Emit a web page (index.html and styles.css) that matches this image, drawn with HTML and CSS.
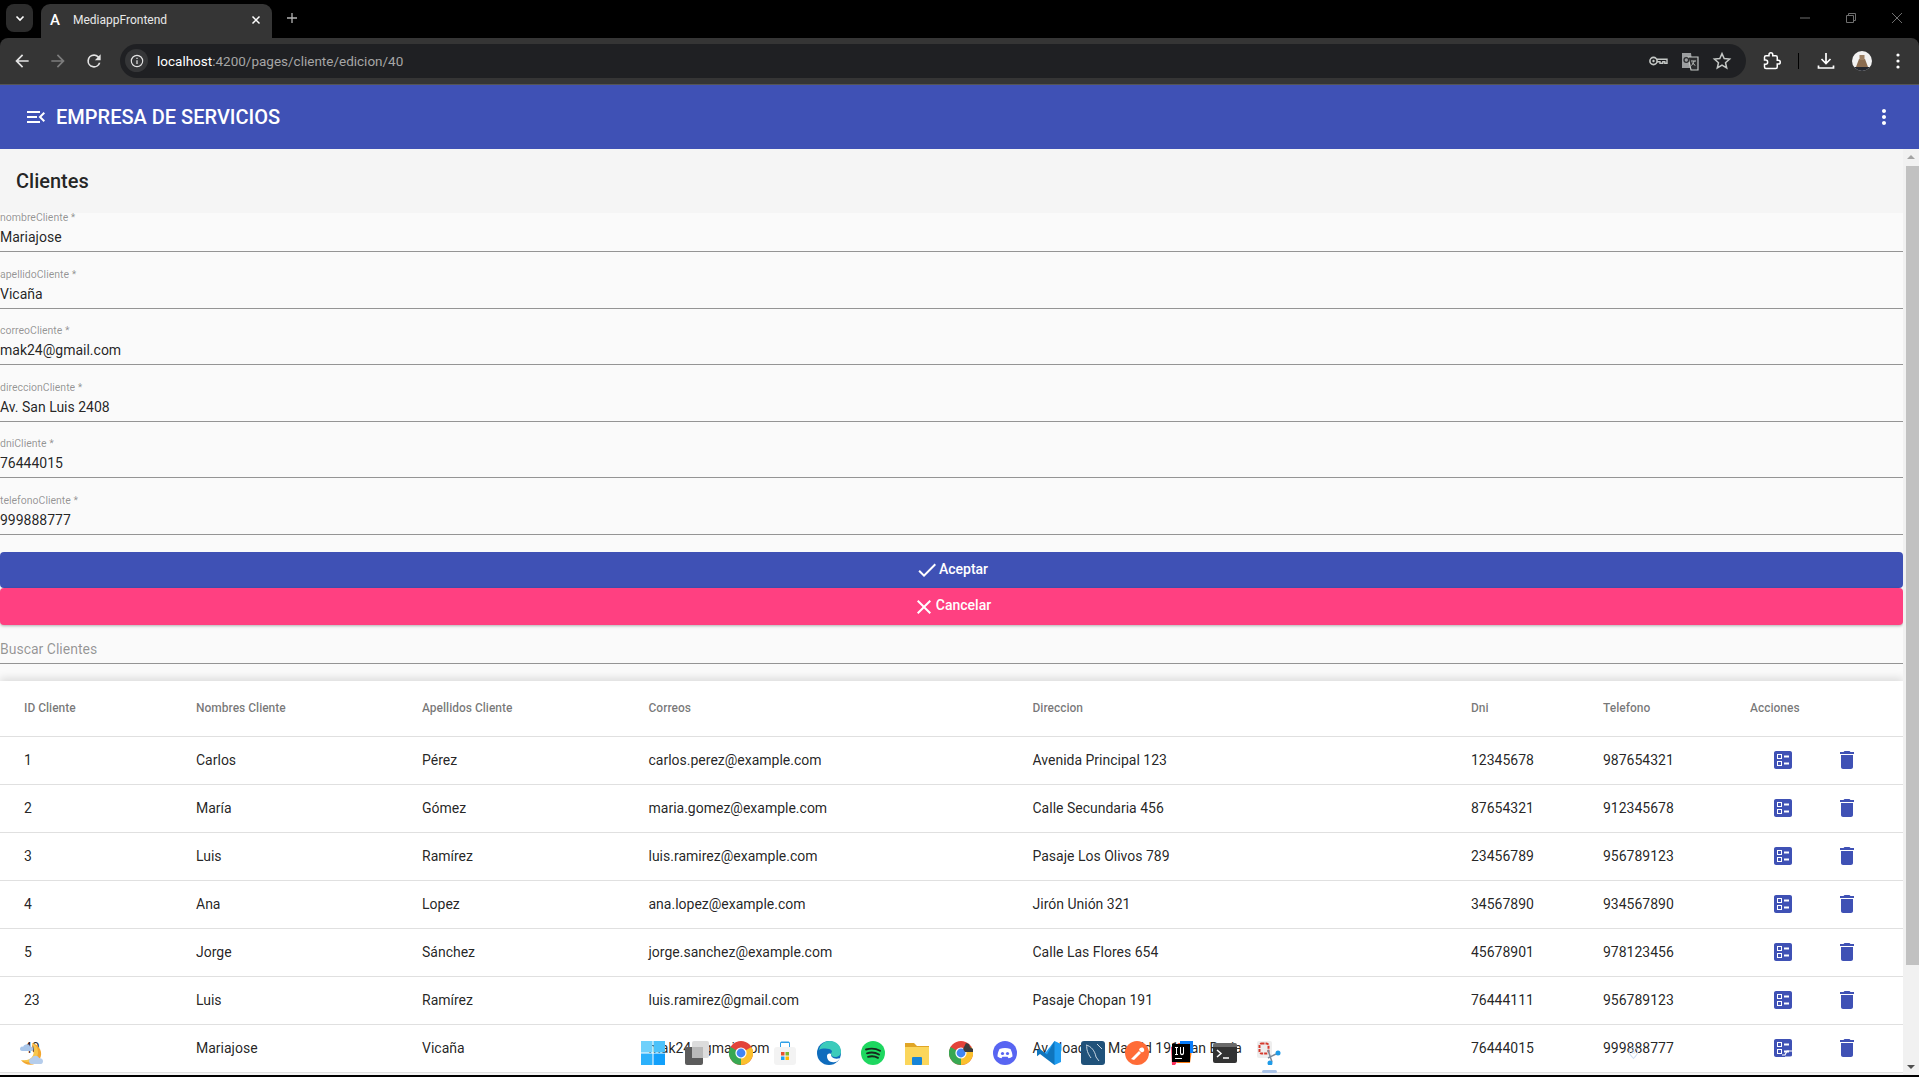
FILE: index.html
```html
<!DOCTYPE html>
<html lang="es">
<head>
<meta charset="UTF-8">
<meta name="viewport" content="width=device-width, initial-scale=1.0">
<title>MediappFrontend</title>
<link rel="stylesheet" href="styles.css">
</head>
<body>

<svg class="defs" width="0" height="0">
    <symbol id="i-ballot" viewBox="0 0 24 24"><path d="M13 9.5h5v-2h-5v2zm0 7h5v-2h-5v2zm6 4.5H5c-1.1 0-2-.9-2-2V5c0-1.1.9-2 2-2h14c1.1 0 2 .9 2 2v14c0 1.1-.9 2-2 2zM6 11h5V6H6v5zm1-4h3v3H7V7zM6 18h5v-5H6v5zm1-4h3v3H7v-3z"/></symbol>
    <symbol id="i-trash" viewBox="0 0 24 24"><path d="M6 19c0 1.1.9 2 2 2h8c1.1 0 2-.9 2-2V7H6v12zM19 4h-3.5l-1-1h-5l-1 1H5v2h14V4z"/></symbol>
</svg>

<div class="screen">

    <!-- browser -->
    <div class="tabstrip">
        <div class="tab-search"><svg viewBox="0 0 12 12" width="12" height="12"><path d="M2.5 4.5 6 8l3.5-3.5" fill="none" stroke="#fff" stroke-width="1.6"/></svg></div>
        <div class="tab">
            <span class="favicon">A</span>
            <span class="tab-title">MediappFrontend</span>
            <svg viewBox="0 0 12 12" width="12" height="12"><path d="M2.5 2.5l7 7m0-7l-7 7" stroke="#fff" stroke-width="1.5"/></svg>
        </div>
        <svg class="new-tab" viewBox="0 0 12 12" width="12" height="12"><path d="M6 1v10M1 6h10" stroke="#b4b4b4" stroke-width="1.3"/></svg>
        <div class="window-controls">
            <svg viewBox="0 0 12 12" width="12" height="12"><path d="M1 6h10" stroke="#6f6f6f"/></svg>
            <svg viewBox="0 0 12 12" width="12" height="12"><path d="M1.5 3.5h7v7h-7zM3.5 3.5v-2h7v7h-2" fill="none" stroke="#6f6f6f"/></svg>
            <svg viewBox="0 0 12 12" width="12" height="12"><path d="M1 1l10 10m0-10L1 11" stroke="#6f6f6f"/></svg>
        </div>
    </div>
    <div class="toolbar">
        <svg class="nav-icon" viewBox="0 0 24 24"><path d="M20 11H7.83l5.59-5.59L12 4l-8 8 8 8 1.41-1.41L7.83 13H20v-2z" fill="#e3e3e3"/></svg>
        <svg class="nav-icon" viewBox="0 0 24 24"><path d="M20 11H7.83l5.59-5.59L12 4l-8 8 8 8 1.41-1.41L7.83 13H20v-2z" fill="#7c7c7c" transform="rotate(180 12 12)"/></svg>
        <svg class="nav-icon" viewBox="0 0 24 24"><path d="M17.65 6.35A7.95 7.95 0 0 0 12 4a8 8 0 1 0 7.73 10h-2.08A6 6 0 1 1 12 6c1.66 0 3.14.69 4.22 1.78L13 11h7V4l-2.35 2.35z" fill="#e3e3e3"/></svg>
        <div class="omnibox">
            <span class="site-chip"><svg viewBox="0 0 16 16" width="14" height="14"><circle cx="8" cy="8" r="6.5" fill="none" stroke="#e3e3e3" stroke-width="1.3"/><path d="M8 7v4.5M8 4.3v1.5" stroke="#e3e3e3" stroke-width="1.4"/></svg></span>
            <span class="url"><b>localhost</b>:4200/pages/cliente/edicion/40</span>
            <div class="omni-actions">
                <svg viewBox="0 0 20 20" width="20" height="20"><circle cx="5.5" cy="10" r="3.6" fill="none" stroke="#c4c7c5" stroke-width="1.6"/><circle cx="5.5" cy="10" r="1.2" fill="#c4c7c5"/><path d="M9 8.2h10v4h-2.2v-1.4h-2v1.4H12v-1.4H9" fill="none" stroke="#c4c7c5" stroke-width="1.4"/></svg>
                <svg viewBox="0 0 20 20" width="20" height="20"><path d="M2 2h9l2 15H2z" fill="#9b9d9f"/><path d="M8 6h10v13H11z" fill="#2b2c2e" stroke="#c4c7c5" stroke-width="1.2"/><path d="M11 10h5m-2 0c-.3 2-1.2 3.4-2.6 4.4m.7-3c.7 1.3 1.8 2.2 3.2 3" fill="none" stroke="#c4c7c5"/><circle cx="6.3" cy="9" r="2.3" fill="none" stroke="#2b2c2e" stroke-width="1.3"/></svg>
                <svg viewBox="0 0 20 20" width="20" height="20"><path d="M10 2.6l2.2 5 5.4.5-4.1 3.6 1.2 5.3L10 14.2 5.3 17l1.2-5.3-4.1-3.6 5.4-.5z" fill="none" stroke="#c4c7c5" stroke-width="1.5"/></svg>
            </div>
        </div>
        <div class="tool-actions">
            <svg class="tool-ext" viewBox="0 0 24 24"><path d="M20.5 11H19V7c0-1.1-.9-2-2-2h-4V3.5C13 2.12 11.88 1 10.5 1S8 2.12 8 3.5V5H4c-1.1 0-1.99.9-1.99 2v3.8H3.5c1.49 0 2.7 1.21 2.7 2.7s-1.21 2.7-2.7 2.7H2V20c0 1.1.9 2 2 2h13c1.1 0 2-.9 2-2v-4h1.5c1.38 0 2.5-1.12 2.5-2.5S21.88 11 20.5 11z" fill="none" stroke="#fff" stroke-width="2"/></svg>
            <span class="tool-sep"></span>
            <svg class="tool-dl" viewBox="0 0 20 20"><path d="M10 2v10M5.5 8l4.5 4.5L14.5 8M2.5 14.5V17h15v-2.500" fill="none" stroke="#fff" stroke-width="1.700"/></svg>
            <svg class="tool-avatar" viewBox="0 0 20 20"><defs><clipPath id="av"><circle cx="10" cy="10" r="10"/></clipPath></defs><g clip-path="url(#av)"><rect width="20" height="20" fill="#f2f2f2"/><rect y="16" width="20" height="4" fill="#23262e"/><path d="M4 16l3-8h6l3 8z" fill="#8a6c50"/><path d="M7.500 4h5v5h-5z" fill="#9c8064"/></g></svg>
            <svg class="tool-menu" viewBox="0 0 4 16"><circle cx="2" cy="2" r="1.6" fill="#fff"/><circle cx="2" cy="8" r="1.6" fill="#fff"/><circle cx="2" cy="14" r="1.6" fill="#fff"/></svg>
        </div>
    </div>

    <!-- app -->
    <header class="app-bar">
        <svg class="menu-icon" viewBox="0 0 24 24"><path d="M3 18h13v-2H3v2zm0-5h10v-2H3v2zm0-7v2h13V6H3zm18 9.59L17.42 12 21 8.41 19.59 7l-5 5 5 5L21 15.59z"/></svg>
        <span class="app-title">EMPRESA DE SERVICIOS</span>
        <svg class="more-icon" viewBox="0 0 24 24"><path d="M12 8c1.1 0 2-.9 2-2s-.9-2-2-2-2 .9-2 2 .9 2 2 2zm0 2c-1.1 0-2 .9-2 2s.9 2 2 2 2-.9 2-2-.9-2-2-2zm0 6c-1.1 0-2 .9-2 2s.9 2 2 2 2-.9 2-2-.9-2-2-2z"/></svg>
    </header>

    <div class="page">
        <main class="content">
            <h1 class="page-title">Clientes</h1>

            <form class="client-form">
                <div class="field"><label>nombreCliente *</label><div class="value">Mariajose</div></div>
                <div class="field"><label>apellidoCliente *</label><div class="value">Vicaña</div></div>
                <div class="field"><label>correoCliente *</label><div class="value">mak24@gmail.com</div></div>
                <div class="field"><label>direccionCliente *</label><div class="value">Av. San Luis 2408</div></div>
                <div class="field"><label>dniCliente *</label><div class="value">76444015</div></div>
                <div class="field"><label>telefonoCliente *</label><div class="value">999888777</div></div>

                <div class="btn btn-primary">
                    <svg viewBox="0 0 24 24"><path d="M9 16.17L4.83 12l-1.42 1.41L9 19 21 7l-1.41-1.41z"/></svg>
                    <span>Aceptar</span>
                </div>
                <div class="btn btn-accent">
                    <svg viewBox="0 0 24 24"><path d="M19 6.41L17.59 5 12 10.59 6.41 5 5 6.41 10.59 12 5 17.59 6.41 19 12 13.41 17.59 19 19 17.59 13.41 12z"/></svg>
                    <span>Cancelar</span>
                </div>

                <div class="search">Buscar Clientes</div>
            </form>

            <table class="client-table">
                <colgroup>
                    <col class="c-id"><col class="c-name"><col class="c-last"><col class="c-mail">
                    <col class="c-addr"><col class="c-dni"><col class="c-tel"><col class="c-act">
                </colgroup>
                <thead>
                    <tr><th>ID Cliente</th><th>Nombres Cliente</th><th>Apellidos Cliente</th><th>Correos</th><th>Direccion</th><th>Dni</th><th>Telefono</th><th>Acciones</th></tr>
                </thead>
                <tbody>
                    <tr><td>1</td><td>Carlos</td><td>Pérez</td><td>carlos.perez@example.com</td><td>Avenida Principal 123</td><td>12345678</td><td>987654321</td>
                        <td><div class="actions"><svg><use href="#i-ballot"/></svg><svg><use href="#i-trash"/></svg></div></td></tr>
                    <tr><td>2</td><td>María</td><td>Gómez</td><td>maria.gomez@example.com</td><td>Calle Secundaria 456</td><td>87654321</td><td>912345678</td>
                        <td><div class="actions"><svg><use href="#i-ballot"/></svg><svg><use href="#i-trash"/></svg></div></td></tr>
                    <tr><td>3</td><td>Luis</td><td>Ramírez</td><td>luis.ramirez@example.com</td><td>Pasaje Los Olivos 789</td><td>23456789</td><td>956789123</td>
                        <td><div class="actions"><svg><use href="#i-ballot"/></svg><svg><use href="#i-trash"/></svg></div></td></tr>
                    <tr><td>4</td><td>Ana</td><td>Lopez</td><td>ana.lopez@example.com</td><td>Jirón Unión 321</td><td>34567890</td><td>934567890</td>
                        <td><div class="actions"><svg><use href="#i-ballot"/></svg><svg><use href="#i-trash"/></svg></div></td></tr>
                    <tr><td>5</td><td>Jorge</td><td>Sánchez</td><td>jorge.sanchez@example.com</td><td>Calle Las Flores 654</td><td>45678901</td><td>978123456</td>
                        <td><div class="actions"><svg><use href="#i-ballot"/></svg><svg><use href="#i-trash"/></svg></div></td></tr>
                    <tr><td>23</td><td>Luis</td><td>Ramírez</td><td>luis.ramirez@gmail.com</td><td>Pasaje Chopan 191</td><td>76444111</td><td>956789123</td>
                        <td><div class="actions"><svg><use href="#i-ballot"/></svg><svg><use href="#i-trash"/></svg></div></td></tr>
                    <tr><td>40</td><td>Mariajose</td><td>Vicaña</td><td>mak24@gmail.com</td><td>Av. Joaquin Madrid 191 San Borja</td><td>76444015</td><td>999888777</td>
                        <td><div class="actions"><svg><use href="#i-ballot"/></svg><svg><use href="#i-trash"/></svg></div></td></tr>
                </tbody>
            </table>
        </main>

        <div class="scrollbar">
            <span class="arrow-up"></span>
            <span class="thumb"></span>
            <span class="arrow-down"></span>
        </div>
    </div>

    <!-- taskbar showing through the capture -->
    <svg class="tray-weather" viewBox="0 0 24 24">
        <path d="M13 2a11 11 0 1 1-11 17c1 .5 3 1 5 .5 6-1 9-5 9-10 0-3-1-6-3-7.500z" fill="#f2a62f"/>
        <path d="M13 2c4 2 6 5 6 9 0 5-3 9-8 10-2 .4-5 0-9-2 5 .5 9 0 11-3 3-4 2-10 0-14z" fill="#f7c64c"/>
        <path d="M1 8c0-2 2-3 3-2 1-3 6-4 7-.5 2 0 3 1 3 2.500 0 1.500-1 2-2 2H3C2 10 1 9 1 8z" fill="#a9c6ea"/>
        <path d="M10 20c0-2 1-3 3-3 1-3 6-3 7 0 2 0 4 1 4 3s-1 3-2 3H12c-1 0-2-1-2-3z" fill="#b5cdec"/>
    </svg>
    <div class="taskbar">
        <svg viewBox="0 0 24 24"><path d="M0 0h11.500v11.500H0z" fill="#6fd0fb"/><path d="M12.500 0H24v11.500H12.500z" fill="#4cc2fa"/><path d="M0 12.500h11.500V24H0z" fill="#2cb1fb"/><path d="M12.500 12.500H24V24H12.500z" fill="#12a0fb"/></svg>
        <svg viewBox="0 0 24 24"><rect x="0" y="6" width="18" height="18" rx="2" fill="#5b5b5b"/><rect x="7" y="0" width="17" height="17" rx="2" fill="#dcdcdc"/><rect x="7" y="6" width="11" height="11" fill="#b9b9b9"/></svg>
        <svg viewBox="0 0 24 24"><circle cx="12" cy="12" r="12" fill="#e3433a"/><path d="M12 12L22.400 6A12 12 0 0 1 12 24z" fill="#fbc02d"/><path d="M12 12L12 24A12 12 0 0 1 1.600 6z" fill="#38a852"/><circle cx="12" cy="12" r="5.600" fill="#fff"/><circle cx="12" cy="12" r="4.400" fill="#4285f4"/></svg>
        <svg viewBox="0 0 24 24"><path d="M7 7V2.500C7 1 8 .5 9 .5h6c1 0 2 .5 2 2V7h-1V2H8v5z" fill="#2f9fe8"/><rect x="1" y="6" width="22" height="18" rx="3" fill="#f3f3f3"/><path d="M8 11h3.500v3.500H8z" fill="#e8502f"/><path d="M12.500 11H16v3.500h-3.500z" fill="#7cb82f"/><path d="M8 15.500h3.500V19H8z" fill="#1ba1f2"/><path d="M12.500 15.500H16V19h-3.500z" fill="#ffb900"/></svg>
        <svg viewBox="0 0 24 24"><circle cx="12" cy="12" r="12" fill="#0f6cbd"/><path d="M2 9C3 3 8 0 13 0c6 0 11 4 11 11 0 3-3 5-6 5-2 0-4-1-4-3 0-1 1-2 1-3-2-3-10-3-13-1z" fill="#3ccbbb"/><path d="M10 15c0 4 3 7 8 6 2 0 4-2 5-4-3 1-6 1-8-1-1-1-1-2-1-3-2-1-4 0-4 2z" fill="#fff"/></svg>
        <svg viewBox="0 0 24 24"><circle cx="12" cy="12" r="12" fill="#1ed760"/><path d="M5 8.500c5-1.500 10-1 14 1.300M6 12.300c4-1.200 8.500-.8 12 1.200M7 15.800c3.300-1 7-.7 10 1" fill="none" stroke="#18281e" stroke-width="1.900" stroke-linecap="round"/></svg>
        <svg viewBox="0 0 24 24"><path d="M0 2h9l3 3h12v19H0z" fill="#e0a526"/><path d="M0 6h24v18H0z" fill="#fbd65b"/><rect x="7" y="16" width="10" height="8" rx="1" fill="#1684d8"/></svg>
        <svg viewBox="0 0 24 24"><circle cx="12" cy="12" r="12" fill="#e3433a"/><path d="M12 12L22.400 6A12 12 0 0 1 12 24z" fill="#fbc02d"/><path d="M12 12L12 24A12 12 0 0 1 1.600 6z" fill="#38a852"/><circle cx="12" cy="12" r="5.600" fill="#fff"/><circle cx="12" cy="12" r="4.400" fill="#4285f4"/><path d="M14 8l3-6 3 1 1 3 3 2v3h-8z" fill="#3b3b3b"/></svg>
        <svg viewBox="0 0 24 24"><circle cx="12" cy="12" r="12" fill="#5865f2"/><path d="M6.500 8c3.500-1.500 7.500-1.500 11 0 1.300 2.500 2 5 2 7.500-1.300 1-2.700 1.500-4 1.700l-.9-1.400h-5.200l-.9 1.400c-1.300-.2-2.700-.7-4-1.700 0-2.500.7-5 2-7.500z" fill="#fff"/><circle cx="9.500" cy="12.500" r="1.600" fill="#5865f2"/><circle cx="14.500" cy="12.500" r="1.600" fill="#5865f2"/></svg>
        <svg viewBox="0 0 24 24"><path d="M17.500 0L24 3v18l-6.500 3L7 13.500z" fill="#1f9cf0"/><path d="M17.500 0v24L3 13l-3 2.200V9l3-1 7 5.500z" fill="#0f75bd"/></svg>
        <svg viewBox="0 0 24 24"><rect width="24" height="24" rx="3" fill="#20527a"/><path d="M5 4c5 1 9 6 10 12l3 4M6 4c-1 4 1 9 4 13" fill="none" stroke="#c8d6e2" stroke-width="1"/><path d="M16 3l5 5" stroke="#c8d6e2"/></svg>
        <svg viewBox="0 0 24 24"><circle cx="12" cy="12" r="12" fill="#ff6c37"/><path d="M6 18l8-8 2 2-7 7zM14 9c1-3 4-3 5-1s-1 4-3 3z" fill="#fff"/></svg>
        <svg viewBox="0 0 24 24"><path d="M2 6l8-4 4 10-8 12H3z" fill="#fe315d"/><path d="M10 2h10l3 7-2 13H8z" fill="#f97a12"/><path d="M11 0h13v12H11z" fill="#087cfa"/><rect x="3" y="3" width="18" height="18" fill="#000"/><path d="M6 6h3v1H8v6h1v1H6v-1h1V7H6zM11 6h1v6c0 1 2 1 2 0V6h1v6c0 3-4 3-4 0zM6 17h7v1H6z" fill="#fff"/></svg>
        <svg viewBox="0 0 24 24"><path d="M2 2h20a2 2 0 0 1 2 2v2H0V4a2 2 0 0 1 2-2z" fill="#6a6a6a"/><path d="M0 6h24v14a2 2 0 0 1-2 2H2a2 2 0 0 1-2-2z" fill="#333"/><path d="M4 9l4 3.500L4 16" fill="none" stroke="#fff" stroke-width="1.500"/><path d="M10 17h6" stroke="#fff" stroke-width="1.500"/></svg>
        <svg viewBox="0 0 24 24"><rect x="0" y="0" width="15" height="17" rx="2" fill="#eeeeee"/><rect x="2.500" y="2.500" width="9" height="10" rx="2" fill="none" stroke="#d5392c" stroke-width="2" stroke-dasharray="3 1"/><path d="M11 9l4 12M19 13l-8 4" stroke="#7c8a99" stroke-width="1.500"/><circle cx="21" cy="12" r="2.500" fill="#1e9be8"/><circle cx="13" cy="22" r="2.500" fill="#1e9be8"/></svg>
    </div>
    <span class="taskbar-active"></span>
    <svg class="tray-pin" viewBox="0 0 14 16"><path d="M7 15C3 11 1.500 9 1.500 6.500a5.500 5.500 0 0 1 11 0C12.500 9 11 11 7 15z" fill="none" stroke="#cfe1f5" stroke-width="1.300"/><circle cx="7" cy="6.500" r="2" fill="none" stroke="#cfe1f5"/></svg>
    <svg class="tray-mark" viewBox="0 0 11 11"><path d="M0 8h3l2-4h6M3 10h8" fill="none" stroke="#fff" stroke-width="1.200"/></svg>
</div>

</body>
</html>
```

FILE: styles.css
```css
* {
    box-sizing: border-box;
}
html, body {
    margin: 0;
    height: 100%;
    overflow: hidden;
}
body {
    font-family: Roboto, "Liberation Sans", sans-serif;
    font-size: 14px;
    color: rgba(0, 0, 0, .87);
}
.defs {
    position: absolute;
}
.screen {
    position: relative;
    display: flex;
    flex-direction: column;
    height: 1077px;
    border-bottom: 2px solid #000;
    background: #000;
}

/* browser */
.tabstrip {
    display: flex;
    align-items: flex-end;
    flex: none;
    height: 38px;
    background: #000;
    padding-left: 6px;
}
.tab-search {
    display: flex;
    align-items: center;
    justify-content: center;
    align-self: flex-start;
    width: 27px;
    height: 28px;
    margin-top: 4px;
    border-radius: 8px;
    background: #2c2c2c;
}
.tab {
    display: flex;
    align-items: center;
    width: 231px;
    height: 34px;
    margin-left: 8px;
    padding: 0 10px 3px 8px;
    border-radius: 9px 9px 0 0;
    background: #353535;
    color: #e8e8e8;
    font-size: 12px;
}
.favicon {
    width: 24px;
    padding-left: 1px;
    font-size: 15px;
    font-weight: 500;
    color: #fff;
}
.tab-title {
    flex: 1;
}
.new-tab {
    margin: 0 0 14px 14px;
}
.window-controls {
    display: flex;
    align-self: flex-start;
    gap: 34px;
    margin: 12px 16px 0 auto;
}
.toolbar {
    display: flex;
    align-items: center;
    flex: none;
    height: 47px;
    padding: 0 0 1px 12px;
    border-radius: 8px 8px 0 0;
    border-bottom: 1px solid #555;
    background: #353535;
}
.nav-icon {
    width: 20px;
    height: 20px;
    margin-right: 16px;
}
.omnibox {
    display: flex;
    align-items: center;
    flex: none;
    width: 1626px;
    height: 34px;
    padding-left: 5px;
    border-radius: 17px;
    background: #1f2023;
}
.site-chip {
    display: flex;
    align-items: center;
    justify-content: center;
    width: 23px;
    height: 23px;
    border-radius: 50%;
    background: #353638;
}
.url {
    margin-left: 9px;
    font-size: 13.5px;
    color: #a6a6a6;
}
.url b {
    font-weight: 400;
    color: #fff;
}
.omni-actions {
    display: flex;
    gap: 12px;
    margin: 0 14px 0 auto;
}
.tool-actions {
    display: flex;
    align-items: center;
    flex: 1;
}
.tool-ext {
    width: 18px;
    height: 18px;
    margin-left: 17px;
}
.tool-sep {
    width: 1px;
    height: 16px;
    margin-left: 17px;
    background: #000;
}
.tool-dl {
    width: 20px;
    height: 20px;
    margin-left: 17px;
}
.tool-avatar {
    width: 20px;
    height: 20px;
    margin-left: 16px;
}
.tool-menu {
    width: 4px;
    height: 16px;
    margin-left: 24px;
}

/* app */
.app-bar {
    display: flex;
    align-items: center;
    flex: none;
    height: 64px;
    padding: 0 23px 0 24px;
    background: #3f51b5;
    color: #fff;
}
.app-bar svg {
    fill: #fff;
}
.menu-icon {
    width: 24px;
    height: 24px;
}
.app-title {
    margin-left: 8px;
    font-size: 20px;
    font-weight: 500;
}
.more-icon {
    width: 24px;
    height: 24px;
    margin-left: auto;
}
.page {
    display: flex;
    flex: 1;
    min-height: 0;
    background: #fafafa;
}
.content {
    flex: 1;
    min-width: 0;
    overflow: hidden;
}
.page-title {
    height: 64px;
    margin: 0;
    padding-left: 16px;
    background: #f5f5f5;
    font-size: 20px;
    font-weight: 500;
    line-height: 64px;
}
.client-form {
    background: #fafafa;
}
.field {
    height: 56.5px;
}
.field label {
    display: block;
    height: 16px;
    font-size: 10.5px;
    line-height: 10px;
    color: rgba(0, 0, 0, .42);
}
.value {
    height: 23px;
    border-bottom: 1px solid #949494;
    font-size: 14px;
    line-height: 17px;
}
.btn {
    display: flex;
    align-items: center;
    justify-content: center;
    height: 36px;
    border-radius: 4px;
    color: #fff;
    font-weight: 500;
}
.btn svg {
    width: 24px;
    height: 24px;
    fill: #fff;
}
.btn span {
    margin-top: -2px;
}
.btn-primary {
    background: #3f51b5;
}
.btn-accent {
    height: 37px;
    background: #ff4081;
    box-shadow: 0 1px 3px rgba(0, 0, 0, .3);
}
.btn-accent span {
    margin-top: -3px;
}
.search {
    height: 26px;
    margin-top: 13px;
    padding-top: 2px;
    border-bottom: 1px solid #949494;
    line-height: 18px;
    color: rgba(0, 0, 0, .42);
}
.client-table {
    width: 100%;
    margin-top: 17px;
    border-collapse: collapse;
    table-layout: fixed;
    background: #fff;
    box-shadow: 0 -3px 8px rgba(0, 0, 0, .12);
}
.c-id { width: 196px; }
.c-name { width: 226px; }
.c-last { width: 226.5px; }
.c-mail { width: 384px; }
.c-addr { width: 438.5px; }
.c-dni { width: 132px; }
.c-tel { width: 147px; }
.client-table th,
.client-table td {
    padding: 0;
    text-align: left;
    border-bottom: 1px solid #e0e0e0;
    white-space: nowrap;
}
.client-table th {
    height: 55px;
    font-size: 12px;
    font-weight: 500;
    color: rgba(0, 0, 0, .54);
}
.client-table td {
    height: 48px;
}
.client-table th:first-child,
.client-table td:first-child {
    padding-left: 24px;
}
.actions {
    display: flex;
    gap: 40px;
    padding-left: 21px;
}
.actions svg {
    width: 24px;
    height: 24px;
    fill: #3f51b5;
}
.scrollbar {
    display: flex;
    flex-direction: column;
    align-items: center;
    flex: none;
    width: 16px;
    background: #f1f1f1;
}
.arrow-up {
    margin-top: 6px;
    border-left: 4px solid transparent;
    border-right: 4px solid transparent;
    border-bottom: 4px solid #a3a3a3;
}
.thumb {
    width: 13px;
    height: 799px;
    margin-top: 7px;
    margin-left: 2px;
    background: #c1c1c1;
}
.arrow-down {
    margin-top: auto;
    margin-bottom: 6px;
    border-left: 4px solid transparent;
    border-right: 4px solid transparent;
    border-top: 4px solid #505050;
}

/* taskbar icons over the page */
.taskbar {
    position: absolute;
    left: 641px;
    top: 1041px;
    display: flex;
    gap: 20px;
}
.taskbar svg {
    width: 24px;
    height: 24px;
}
.taskbar-active {
    position: absolute;
    left: 1262px;
    top: 1070px;
    width: 15px;
    height: 3px;
    border-radius: 2px;
    background: #a9c3e8;
}
.tray-weather {
    position: absolute;
    left: 19px;
    top: 1041px;
    width: 24px;
    height: 24px;
}
.tray-pin {
    position: absolute;
    left: 1628px;
    top: 1046px;
    width: 11px;
    height: 14px;
}
.tray-mark {
    position: absolute;
    left: 1782px;
    top: 1047px;
    width: 11px;
    height: 11px;
}
```
